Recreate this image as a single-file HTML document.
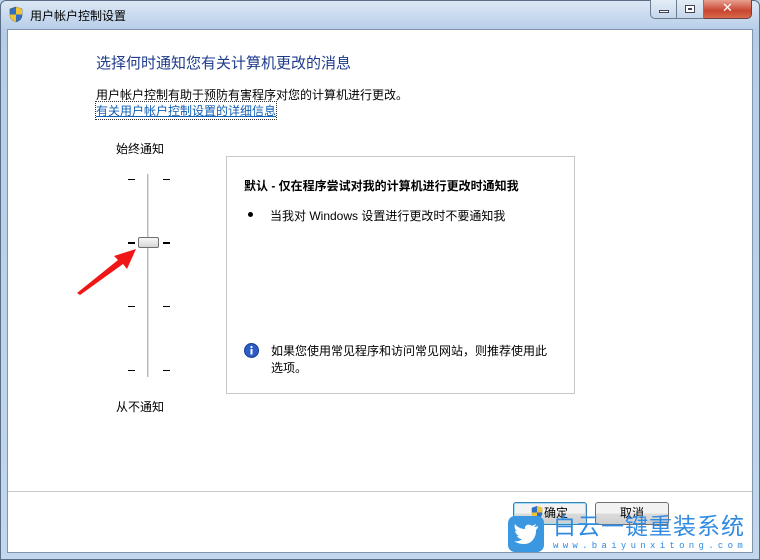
<!DOCTYPE html>
<html><head><meta charset="utf-8"><style>
*{margin:0;padding:0;box-sizing:border-box}
body{width:760px;height:560px;overflow:hidden;background:#b9d1ea;font-family:"Liberation Sans","Noto Sans CJK SC",sans-serif;font-size:12px;color:#000;position:relative}
.frame{position:absolute;left:0;top:0;width:760px;height:560px;background:linear-gradient(#dbe7f5,#b6cde8 30px,#c2d7ee);border:1px solid #5a6e86;border-radius:6px 6px 0 0}
.client{position:absolute;left:7px;top:29px;width:746px;height:524px;background:#fff;border:1px solid #8196ad}
.abs{position:absolute;white-space:nowrap}
.tick{position:absolute;height:1px;width:7px;background:#000}
.btn{position:absolute;height:23px;border:1px solid #707070;border-radius:3px;background:linear-gradient(#f2f2f2 50%,#dcdcdc 50%,#cfcfcf);text-align:center;line-height:21px}
</style></head><body>
<div class="frame"></div>
<svg class="abs" style="left:8px;top:6px" width="16" height="17" viewBox="0 0 16 17"><path d="M8 1 L14 3 V9 C14 13 11 15 8 16 C5 15 2 13 2 9 V3 Z" fill="#2f6fc4" stroke="#555" stroke-width=".6"/><path d="M8 1 L14 3 V8.5 H8 Z" fill="#f1c232"/><path d="M2 8.5 H8 V16 C5 15 2 13 2 9Z" fill="#f1c232"/></svg>
<div class="abs" style="left:30px;top:7px;font-size:12px">用户帐户控制设置</div>
<div class="abs" style="left:650px;top:0;width:27px;height:19px;border:1px solid #6c7c90;border-top:none;border-radius:0 0 0 5px;background:linear-gradient(#e4edf7,#c5d6ea)"><div style="position:absolute;left:8px;top:10px;width:10px;height:3px;background:#fff;border:1px solid #445"></div></div>
<div class="abs" style="left:677px;top:0;width:27px;height:19px;border:1px solid #6c7c90;border-top:none;border-left:none;background:linear-gradient(#e4edf7,#c5d6ea)"><div style="position:absolute;left:8px;top:5px;width:10px;height:8px;border:1px solid #445;background:#fff"><div style="margin:2px;height:2px;border:1px solid #445"></div></div></div>
<div class="abs" style="left:704px;top:0;width:48px;height:19px;border:1px solid #6c4040;border-top:none;border-left:none;border-radius:0 0 5px 0;background:linear-gradient(#e8a090,#c84530 60%,#d86a4a);color:#fff;font-weight:bold;text-align:center;line-height:17px;font-size:13px;font-family:'DejaVu Sans'">✕</div>
<div class="client"></div>
<div class="abs" style="left:96px;top:52px;font-size:15px;color:#1e3b8c">选择何时通知您有关计算机更改的消息</div>
<div class="abs" style="left:96px;top:86px">用户帐户控制有助于预防有害程序对您的计算机进行更改。</div>
<div class="abs" style="left:96px;top:102px;color:#0f5fb5;text-decoration:underline;outline:1px dotted #333">有关用户帐户控制设置的详细信息</div>
<div class="abs" style="left:116px;top:140px">始终通知</div>
<div class="abs" style="left:116px;top:398px">从不通知</div>
<div class="abs" style="left:147px;top:174px;width:2px;height:203px;background:#b8b8b8;border-right:1px solid #e0e0e0"></div>
<div class="tick" style="left:128px;top:179px"></div><div class="tick" style="left:163px;top:179px"></div>
<div class="tick" style="left:128px;top:242px;height:2px"></div><div class="tick" style="left:163px;top:242px;height:2px"></div>
<div class="tick" style="left:128px;top:306px"></div><div class="tick" style="left:163px;top:306px"></div>
<div class="tick" style="left:128px;top:370px"></div><div class="tick" style="left:163px;top:370px"></div>
<div class="abs" style="left:138px;top:237px;width:21px;height:11px;border:1px solid #707070;border-radius:2px;background:linear-gradient(#f8f8f8,#d6d6d6)"></div>
<svg class="abs" style="left:74px;top:246px" width="64" height="50" viewBox="0 0 64 50"><path d="M3 47 L44 14 L40 10 L62 3 L53 23 L49 18 L6 49 Z" fill="#f01616"/></svg>
<div class="abs" style="left:226px;top:156px;width:349px;height:238px;border:1px solid #c8c8c8"></div>
<div class="abs" style="left:244px;top:177px;font-weight:bold">默认 - 仅在程序尝试对我的计算机进行更改时通知我</div>
<div class="abs" style="left:248px;top:212px;width:5px;height:5px;border-radius:50%;background:#000"></div>
<div class="abs" style="left:270px;top:207px">当我对 Windows 设置进行更改时不要通知我</div>
<svg class="abs" style="left:244px;top:343px" width="15" height="15" viewBox="0 0 15 15"><circle cx="7.5" cy="7.5" r="7" fill="#2b5cc7" stroke="#1a3d8a"/><rect x="6.5" y="6" width="2" height="5.5" fill="#fff"/><circle cx="7.5" cy="4" r="1.1" fill="#fff"/></svg>
<div class="abs" style="left:271px;top:343px;line-height:17px">如果您使用常见程序和访问常见网站，则推荐使用此<br>选项。</div>
<div class="abs" style="left:8px;top:491px;width:744px;height:1px;background:#c8c8c8"></div>
<div class="btn" style="left:513px;top:502px;width:74px;border-color:#3c7fb1;box-shadow:inset 0 0 0 1px #9fdcf6">　确定</div>
<svg class="abs" style="left:530px;top:505px" width="14" height="15" viewBox="0 0 16 17"><path d="M8 1 L14 3 V9 C14 13 11 15 8 16 C5 15 2 13 2 9 V3 Z" fill="#2f6fc4"/><path d="M8 1 L14 3 V8.5 H8 Z" fill="#f1c232"/><path d="M2 8.5 H8 V16 C5 15 2 13 2 9Z" fill="#f1c232"/></svg>
<div class="btn" style="left:595px;top:502px;width:74px">取消</div>
<div class="abs" style="left:508px;top:516px;width:36px;height:36px;border-radius:7px;background:#3a97e0"></div>
<svg class="abs" style="left:512px;top:522px" width="28" height="24" viewBox="0 0 28 24"><path d="M26 4 C24 5 23 5 22 5 C23 4 24 3 24 2 C23 3 21 3 20 4 C18 2 14 2 13 5 C13 6 13 7 13 7 C9 7 5 5 3 2 C2 5 3 8 5 9 C4 9 3 9 3 8 C3 11 5 13 7 14 C6 14 5 14 5 14 C6 16 8 17 10 17 C8 19 5 20 2 19 C5 21 8 22 12 22 C20 22 24 15 24 9 L24 8 C25 7 26 6 26 4 Z" fill="#fff"/></svg>
<div class="abs" style="left:553px;top:513px;font-size:23px;line-height:26px;color:#2f8ae0;letter-spacing:1px">白云一键重装系统</div>
<div class="abs" style="left:553px;top:541px;font-family:'Liberation Mono',monospace;font-size:9px;color:#2f8ae0;letter-spacing:4.3px">www.baiyunxitong.com</div>
</body></html>
